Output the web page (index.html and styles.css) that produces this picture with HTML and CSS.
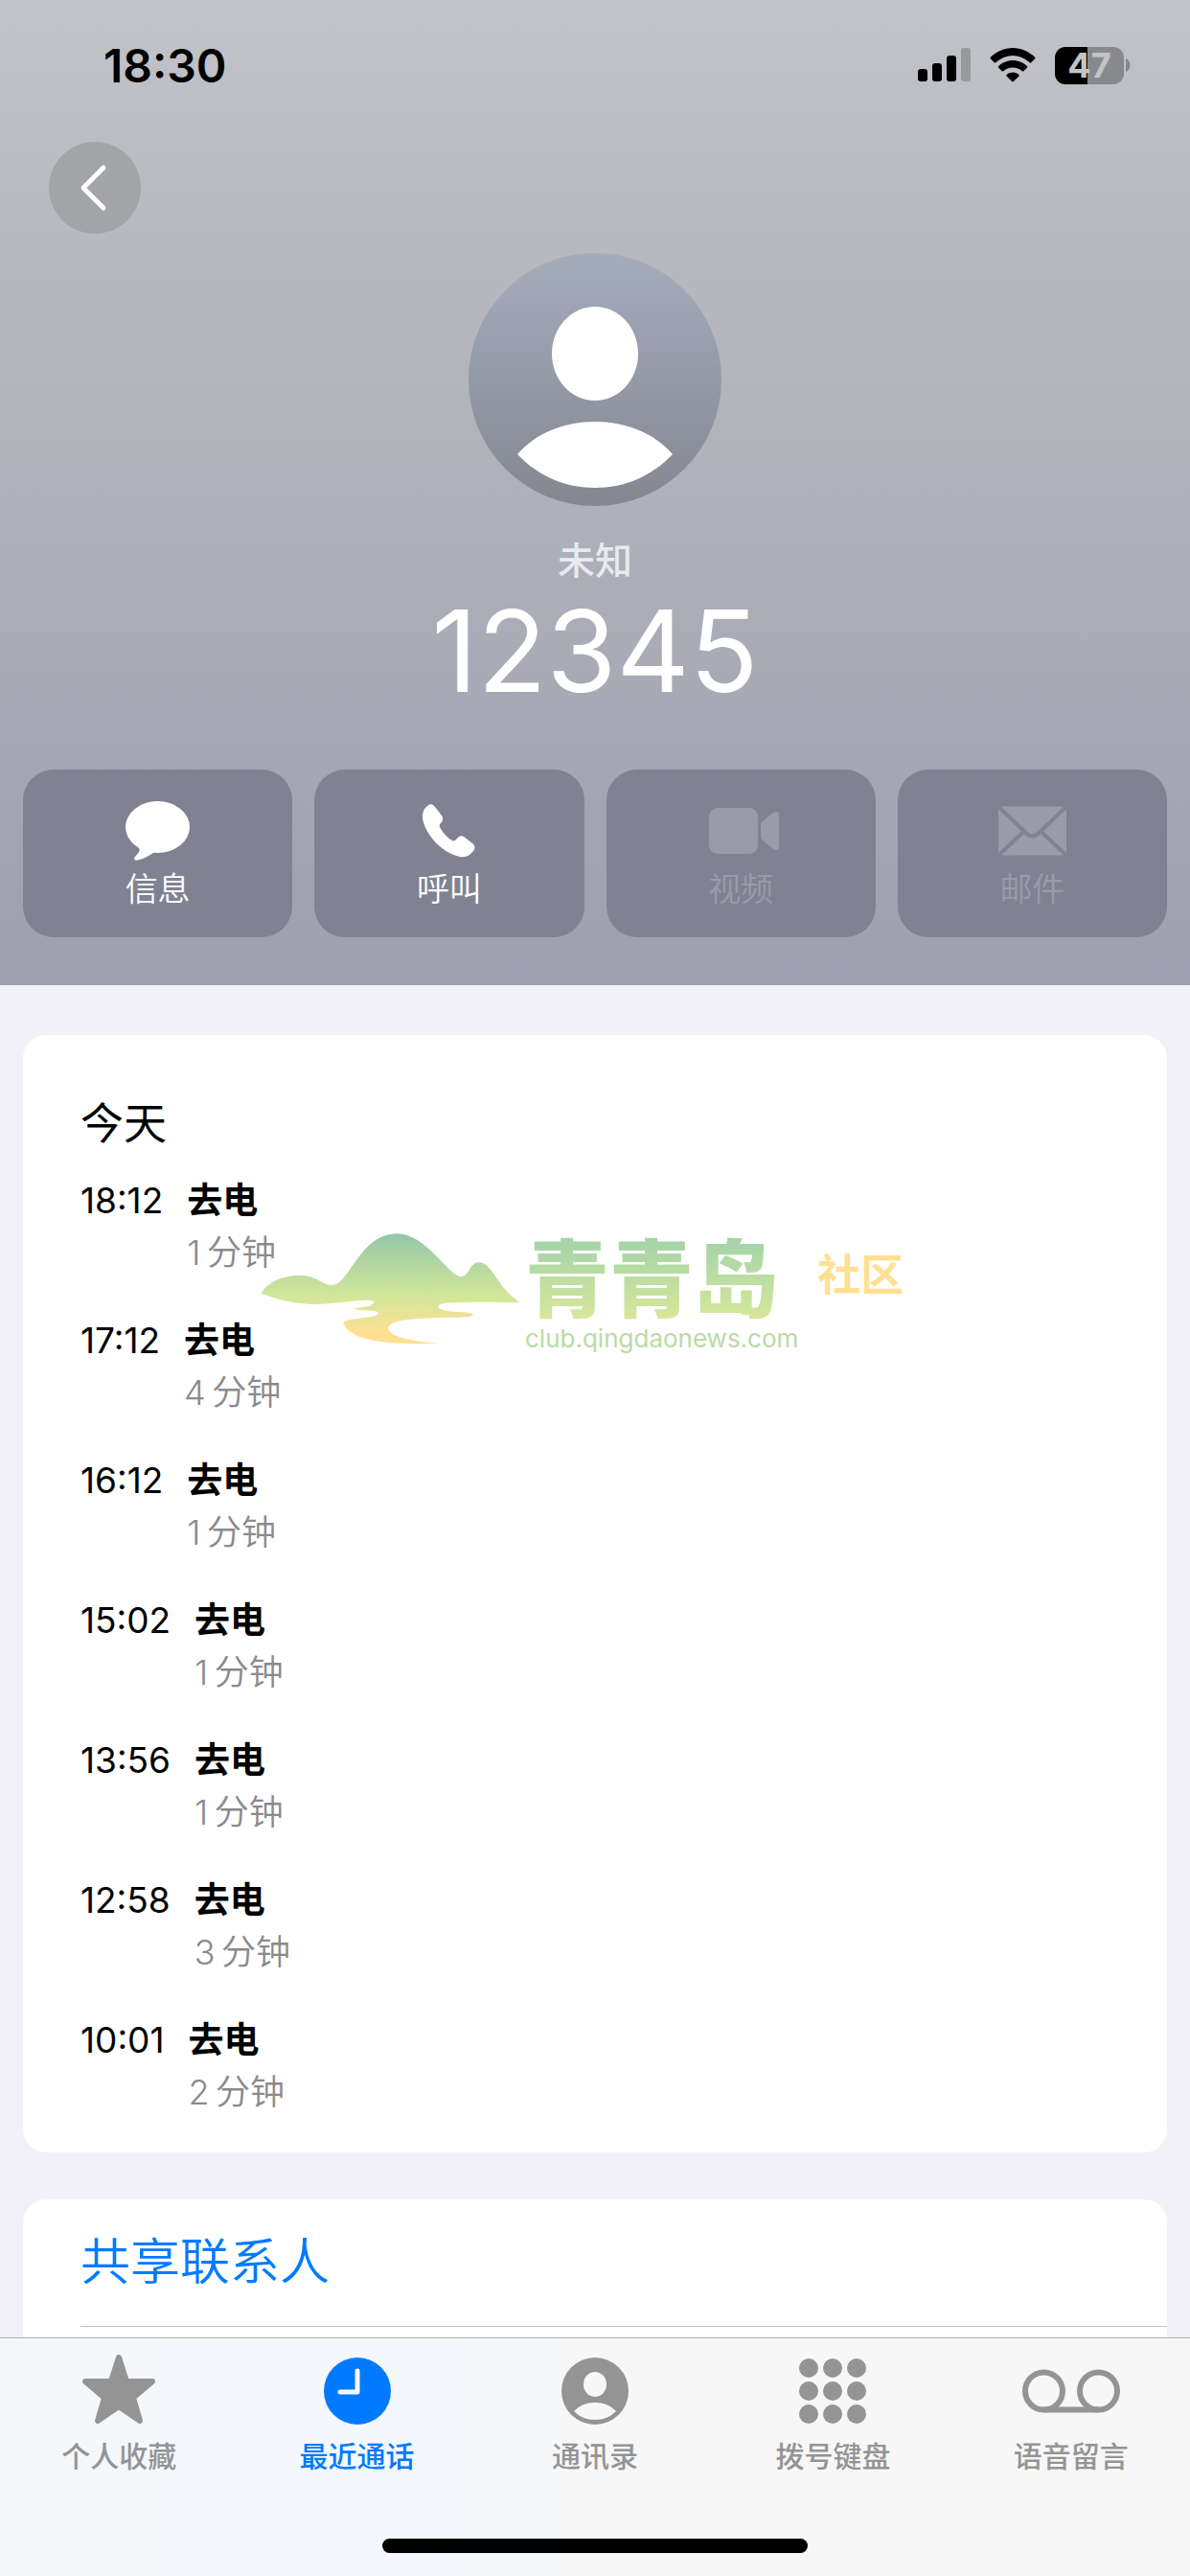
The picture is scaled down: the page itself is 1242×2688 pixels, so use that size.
FILE: index.html
```html
<!DOCTYPE html>
<html lang="zh-CN">
<head>
    <meta charset="UTF-8">
    <meta name="viewport" content="width=device-width, initial-scale=1.0">
    <title>12345</title>
    <link rel="stylesheet" href="styles.css">
</head>
<body>
    <div class="app">
        <header class="header">
            <div class="status">
                <span class="clock">18:30</span>
                <div class="status-icons">
                    <svg width="55" height="36" viewBox="0 0 55 36">
                        <rect x="0" y="22" width="10" height="13" rx="3"/>
                        <rect x="15" y="16" width="10" height="19" rx="3"/>
                        <rect x="30" y="8" width="10" height="27" rx="3"/>
                        <rect x="45" y="0" width="10" height="35" rx="3" fill="#98999d"/>
                    </svg>
                    <svg class="wifi" width="48" height="36" viewBox="0 0 48 36">
                        <path d="M24 0C33 0 41 4 47 9.500Q48 10.500 47 11.500L43.500 15Q42.500 16 41.500 15C36 10.500 30 8 24 8S12 10.500 6.500 15Q5.500 16 4.500 15L1 11.500Q0 10.500 1 9.500C7 4 15 0 24 0Z"/>
                        <path d="M24 13C30 13 35 15.500 39 19Q39.500 20 39 20.500L35.500 24Q34.500 25 33.500 24C31 22 28 20.500 24 20.500S17 22 14.500 24Q13.500 25 12.500 24L9 20.500Q8.500 20 9 19C13 15.500 18 13 24 13Z"/>
                        <path d="M24 25.500C27 25.500 29 26.500 30.500 28Q31 29 30.500 29.500L24.800 35Q24 35.800 23.200 35L17.500 29.500Q17 29 17.500 28C19 26.500 21 25.500 24 25.500Z"/>
                    </svg>
                    <span class="battery">47</span>
                    <svg class="battery-cap" width="5" height="14" viewBox="0 0 5 14"><path d="M0 0C6 2 6 12 0 14Z" fill="#88898d"/></svg>
                </div>
            </div>

            <button class="back" type="button" aria-label="返回">
                <svg width="30" height="50" viewBox="0 0 30 50" fill="none" stroke="#fff" stroke-width="5" stroke-linecap="round" stroke-linejoin="round">
                    <path d="M26 4L5 25L26 46"/>
                </svg>
            </button>

            <div class="profile">
                <svg class="avatar" width="264" height="264" viewBox="0 0 264 264">
                    <defs>
                        <linearGradient id="avatarBg" x1="0" y1="0" x2="0" y2="1">
                            <stop offset="0" stop-color="#a5acbc"/>
                            <stop offset="1" stop-color="#848791"/>
                        </linearGradient>
                    </defs>
                    <circle cx="132" cy="132" r="132" fill="url(#avatarBg)"/>
                    <ellipse cx="132" cy="105" rx="45" ry="49" fill="#fff"/>
                    <path d="M51 210C70 188 100 176 132 176S194 188 213 210C190 234 162 245 132 245S74 234 51 210Z" fill="#fff"/>
                </svg>
                <div class="label">未知</div>
                <h1 class="number">12345</h1>
            </div>

            <div class="actions">
                <button class="action" type="button">
                    <svg width="67" height="62" viewBox="0 0 67 62" fill="#fff">
                        <ellipse cx="33.500" cy="27" rx="33.500" ry="27"/>
                        <path d="M12 46C18 52 12 55 9.500 58.500C8 61 10 62 13 61.500C20 60 26 56 30 53L33 40Z"/>
                    </svg>
                    <span>信息</span>
                </button>
                <button class="action" type="button">
                    <svg width="55" height="56" viewBox="0 0 55 56" fill="#fff">
                        <path d="M5 2C8 -1 11 0 13 3L20 12C22 15 21 17 20 19L18 21C17 23 18 24 19 26C23 32 27 36 31 38C33 39 34 38 35 37L37 35C39 33 41 33 43 34L52 41C55 43 55 47 53 49C49 54 45 56 39 55C20 51 3 32 0 15C0 9 1 5 5 2Z"/>
                    </svg>
                    <span>呼叫</span>
                </button>
                <button class="action" type="button" disabled>
                    <svg width="79" height="48" viewBox="-6 0 79 48" fill="#999ba9">
                        <rect width="51" height="48" rx="9"/>
                        <path d="M55 15L67 5C70 3 73 4 73 8V41C73 45 70 45 67 43L55 33Q54 32 54 30V18Q54 16 55 15Z"/>
                    </svg>
                    <span>视频</span>
                </button>
                <button class="action" type="button" disabled>
                    <svg width="71" height="51" viewBox="0 0 71 51">
                        <rect width="71" height="51" rx="3" fill="#999ba9"/>
                        <path d="M0 0L29 28Q35.500 34 42 28L71 0M0 51L27 26M71 51L44 26" fill="none" stroke="#808292" stroke-width="4"/>
                    </svg>
                    <span>邮件</span>
                </button>
            </div>
        </header>

        <main class="content">
            <section class="card calls">
                <h2>今天</h2>
                <ul>
                    <li><time>18:12</time><div><strong>去电</strong><span>1&thinsp;分钟</span></div></li>
                    <li><time>17:12</time><div><strong>去电</strong><span>4&thinsp;分钟</span></div></li>
                    <li><time>16:12</time><div><strong>去电</strong><span>1&thinsp;分钟</span></div></li>
                    <li><time>15:02</time><div><strong>去电</strong><span>1&thinsp;分钟</span></div></li>
                    <li><time>13:56</time><div><strong>去电</strong><span>1&thinsp;分钟</span></div></li>
                    <li><time>12:58</time><div><strong>去电</strong><span>3&thinsp;分钟</span></div></li>
                    <li><time>10:01</time><div><strong>去电</strong><span>2&thinsp;分钟</span></div></li>
                </ul>

                <!-- site watermark, lies over the list -->
                <div class="watermark">
                    <svg width="271" height="116" viewBox="36 50 812 348">
                        <defs>
                            <linearGradient id="hill" x1="0" y1="0" x2="0" y2="1">
                                <stop offset="0" stop-color="#93c7a8"/>
                                <stop offset="0.550" stop-color="#d0e69a"/>
                                <stop offset="0.900" stop-color="#ffe092"/>
                            </linearGradient>
                        </defs>
                        <path fill="url(#hill)" d="M36 238C60 200 105 181 162 181C215 183 225 212 262 212C315 208 345 52 463 51C555 52 625 185 662 185C692 184 688 141 720 141C765 146 768 210 848 267C780 266 730 264 660 266C620 267 592 268 592 280C598 300 690 292 701 303C702 315 650 312 590 314C500 317 436 322 435 348C440 375 510 388 597 395C560 397 520 396 480 394C350 390 305 360 294 331C300 312 405 318 405 299C395 286 335 295 330 286C335 279 388 285 390 265C380 250 300 267 215 272C150 272 100 260 36 238Z"/>
                    </svg>
                    <div class="wordmark">
                        <b>青青岛</b>
                        <small>club.qingdaonews.com</small>
                    </div>
                    <span class="community">社区</span>
                </div>
            </section>

            <section class="card share">
                <a href="#share">共享联系人</a>
            </section>
        </main>

        <footer class="tabbar">
            <nav>
                <a href="#favorites">
                    <svg width="76" height="76" viewBox="0 0 76 76" fill="currentColor" stroke="currentColor" stroke-width="6" stroke-linejoin="round">
                        <path d="M38 3L46 28H73L53 45L60 69L38 54L16 69L23 45L3 28H30Z"/>
                    </svg>
                    <span>个人收藏</span>
                </a>
                <a href="#recents" class="active">
                    <svg width="76" height="76" viewBox="0 0 76 76">
                        <circle cx="38" cy="38" r="35" fill="currentColor"/>
                        <path d="M38 17V39H20" fill="none" stroke="#f4f8fd" stroke-width="5" stroke-linecap="round" stroke-linejoin="round"/>
                    </svg>
                    <span>最近通话</span>
                </a>
                <a href="#contacts">
                    <svg width="76" height="76" viewBox="0 0 76 76">
                        <circle cx="38" cy="38" r="35" fill="currentColor"/>
                        <ellipse cx="38" cy="31" rx="12" ry="13" fill="#f7f7f7"/>
                        <path d="M16 59C22 53 29 50 38 50S54 53 60 59C54 65 47 68 38 68S22 65 16 59Z" fill="#f7f7f7"/>
                    </svg>
                    <span>通讯录</span>
                </a>
                <a href="#keypad">
                    <svg width="76" height="76" viewBox="0 0 76 76" fill="currentColor">
                        <circle cx="13" cy="14" r="10"/><circle cx="38" cy="14" r="10"/><circle cx="63" cy="14" r="10"/>
                        <circle cx="13" cy="38" r="10"/><circle cx="38" cy="38" r="10"/><circle cx="63" cy="38" r="10"/>
                        <circle cx="13" cy="62" r="10"/><circle cx="38" cy="62" r="10"/><circle cx="63" cy="62" r="10"/>
                    </svg>
                    <span>拨号键盘</span>
                </a>
                <a href="#voicemail">
                    <svg width="102" height="76" viewBox="0 0 102 76" fill="none" stroke="currentColor" stroke-width="6">
                        <circle cx="22.500" cy="38" r="19.500"/>
                        <circle cx="79.500" cy="38" r="19.500"/>
                        <path d="M22 57.500H80"/>
                    </svg>
                    <span>语音留言</span>
                </a>
            </nav>
            <div class="home-indicator"></div>
        </footer>
    </div>
</body>
</html>
```

FILE: styles.css
```css
* {
    box-sizing: border-box;
}
body {
    margin: 0;
    font-family: Inter, "Noto Sans CJK SC", sans-serif;
    color: #000;
    background: #f2f1f7;
}
h1, h2, ul {
    margin: 0;
    padding: 0;
    font-weight: 400;
    list-style: none;
}
svg {
    display: block;
    flex: none;
}
button {
    font: inherit;
    border: none;
    padding: 0;
    cursor: pointer;
}
a {
    text-decoration: none;
}
.app {
    display: flex;
    flex-direction: column;
    min-height: 100vh;
}

/* Header */
.header {
    padding-bottom: 50px;
    background: linear-gradient(#c2c3c8, #b8b9be 25%, #adb0b9 55%, #a6a7b4 75%, #9fa0af);
}
.status {
    display: flex;
    justify-content: space-between;
    align-items: center;
    height: 136px;
    margin-bottom: 12px;
    padding: 0 62px 0 108px;
}
.clock {
    font-size: 48px;
    font-weight: 600;
}
.status-icons {
    display: flex;
    align-items: center;
}
.wifi {
    margin: 0 20px;
}
.battery {
    width: 72px;
    height: 39px;
    border-radius: 11px;
    background: linear-gradient(90deg, #000 47%, #88898d 47%);
    color: #c3c4c8;
    font-size: 36px;
    font-weight: 700;
    line-height: 39px;
    text-align: center;
}
.battery-cap {
    margin-left: 2px;
}
.back {
    display: flex;
    align-items: center;
    justify-content: center;
    width: 96px;
    height: 96px;
    margin-left: 51px;
    padding-right: 4px;
    border-radius: 50%;
    background: #a3a4a8;
}
.profile {
    display: flex;
    flex-direction: column;
    align-items: center;
    margin-top: 20px;
    color: #fff;
}
.label {
    margin-top: 32px;
    font-size: 39px;
    font-weight: 500;
    line-height: 50px;
    color: #e9eaed;
}
.number {
    margin-top: 9px;
    font-size: 118px;
    line-height: 120px;
}
.actions {
    display: grid;
    grid-template-columns: repeat(4, 1fr);
    gap: 23px;
    margin-top: 64px;
    padding: 0 24px;
}
.action {
    display: flex;
    flex-direction: column;
    align-items: center;
    height: 175px;
    padding-top: 28px;
    border-radius: 32px;
    background: #808292;
    color: #fff;
    font-size: 34px;
    font-weight: 350;
}
.action svg {
    height: 72px;
}
.action span {
    line-height: 50px;
}
.action:disabled {
    color: #999ba9;
    cursor: default;
}

/* Call history */
.content {
    display: flex;
    flex: 1;
    flex-direction: column;
    gap: 49px;
    padding: 52px 24px 0;
}
.card {
    background: #fff;
    border-radius: 24px;
}
.calls {
    position: relative;
    padding: 63px 60px 35px;
}
.calls h2 {
    margin-bottom: 22px;
    font-size: 45px;
    line-height: 60px;
}
.calls ul {
    display: flex;
    flex-direction: column;
    gap: 36px;
}
.calls li {
    display: flex;
    gap: 25px;
    font-size: 37px;
    line-height: 55px;
}
.calls li div {
    display: flex;
    flex-direction: column;
}
.calls li strong {
    font-weight: 600;
}
.calls li span {
    color: #8a8a8d;
    font-size: 36px;
    font-weight: 350;
}
.watermark {
    position: absolute;
    top: 207px;
    left: 248px;
    display: flex;
}
.wordmark {
    display: flex;
    flex-direction: column;
    margin-left: 5px;
}
.wordmark b {
    font-size: 88px;
    font-weight: 900;
    line-height: 96px;
    background: linear-gradient(#a5d4a9 10%, #d5e79a 90%);
    background-clip: text;
    -webkit-background-clip: text;
    color: transparent;
}
.wordmark small {
    font-size: 26px;
    line-height: 28px;
    color: #b9dba5;
}
.community {
    margin: 14px 0 0 20px;
    font-size: 45px;
    font-weight: 700;
    line-height: 60px;
    color: #ffe092;
}
.share {
    flex: 1;
    padding: 0 0 10px 60px;
    border-radius: 24px 24px 0 0;
}
.share a {
    display: block;
    border-bottom: 1px solid #c0c0c3;
    font-size: 52px;
    font-weight: 350;
    line-height: 132px;
    color: #007aff;
}

/* Tab bar */
.tabbar {
    padding: 17px 0 24px;
    border-top: 1px solid #acadb0;
    background: linear-gradient(90deg, #f4f8f9, #f4f8fd 20%, #f4f7fb 38%, #f7f7f7 50%);
}
.tabbar nav {
    display: grid;
    grid-template-columns: repeat(5, 1fr);
}
.tabbar nav a {
    display: flex;
    flex-direction: column;
    align-items: center;
    gap: 12px;
    color: #949495;
    font-size: 30px;
    font-weight: 500;
    line-height: 36px;
}
.tabbar nav .active {
    color: #007aff;
}
.home-indicator {
    width: 444px;
    max-width: 36%;
    height: 15px;
    margin: 68px auto 0;
    border-radius: 8px;
    background: #000;
}
```
